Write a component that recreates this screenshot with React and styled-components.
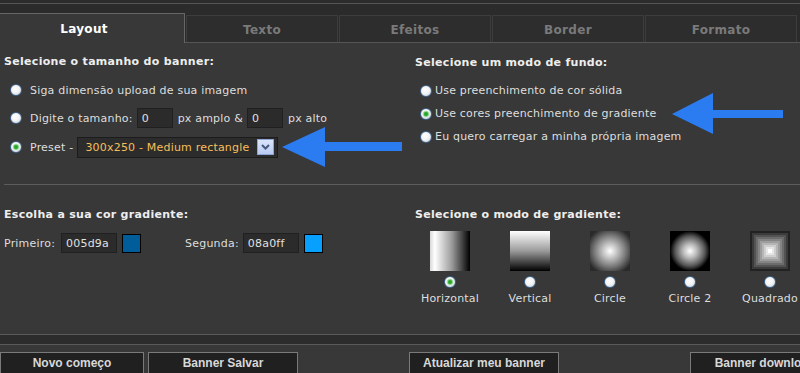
import React from 'react';
import styled, { createGlobalStyle } from 'styled-components';

const Global = createGlobalStyle`
  html, body {
    margin: 0;
    padding: 0;
    background: #383838;
    overflow: hidden;
  }
`;

const font = `"DejaVu Sans", Verdana, sans-serif`;

const Page = styled.div`
  width: 800px;
  height: 373px;
  overflow: hidden;
  position: relative;
  background: #383838;
  font-family: ${font};
  font-size: 11px;
  letter-spacing: 0.2px;
  color: #dedede;
`;

const TopStrip = styled.div`
  height: 3px;
  background: #2c2c2c;
  border-bottom: 1px solid #555;
`;

const TabBar = styled.div`
  display: flex;
  align-items: flex-end;
  height: 38px;
  background: #2b2b2b;
  border-bottom: 1px solid #555;
`;

const Tab = styled.div`
  box-sizing: border-box;
  display: flex;
  align-items: center;
  justify-content: center;
  font-weight: bold;
  font-size: 12px;
  letter-spacing: 0.3px;
  ${(p) =>
    p.$active
      ? `
    width: 185px;
    height: 30px;
    margin-bottom: -1px;
    padding-right: 16px;
    background: #383838;
    color: #fff;
    border-top: 1px solid #666;
    border-right: 1px solid #666;
  `
      : `
    width: 152px;
    height: 27px;
    margin-left: 1px;
    background: #2d2d2d;
    color: #7a7a7a;
    border: 1px solid #3d3d3d;
    border-bottom: none;
    padding-top: 1px;
  `}
`;

const Section = styled.div`
  position: relative;
  display: grid;
  grid-template-columns: 411px 1fr;
  height: ${(p) => p.$height}px;
  padding-left: 4px;
  box-sizing: border-box;
`;

const Column = styled.div`
  padding-top: ${(p) => p.$top}px;
`;

const Heading = styled.div`
  font-weight: bold;
  color: #eee;
  line-height: 14px;
  letter-spacing: 0.3px;
  margin-bottom: ${(p) => p.$gap}px;
`;

const Row = styled.div`
  display: flex;
  align-items: center;
  height: ${(p) => p.$h}px;
  white-space: nowrap;
`;

const RadioDot = styled.span`
  box-sizing: border-box;
  width: 12px;
  height: 12px;
  flex: none;
  border-radius: 50%;
  border: 1px solid #3f6590;
  background: radial-gradient(circle at 40% 35%, #fff 0, #f4f4f4 45%, #c4cfdb 100%);
  margin-left: ${(p) => p.$ml || 0}px;
  margin-right: ${(p) => p.$mr || 0}px;
  display: flex;
  align-items: center;
  justify-content: center;
  &::after {
    content: '';
    display: ${(p) => (p.$checked ? 'block' : 'none')};
    width: 4px;
    height: 4px;
    border-radius: 50%;
    background: #2aa52a;
    box-shadow: 0 0 1px 1px #7ccf7c;
  }
`;

const TextInput = styled.div`
  box-sizing: border-box;
  width: ${(p) => p.$w}px;
  height: 20px;
  background: #2b2b2b;
  border: 1px solid #202020;
  color: #e0e0e0;
  padding-left: 4px;
  display: flex;
  align-items: center;
  margin: 0 ${(p) => p.$mr || 0}px 0 ${(p) => p.$ml || 0}px;
`;

const Select = styled.div`
  box-sizing: border-box;
  width: 201px;
  height: 21px;
  margin-left: 4px;
  background: #2c2c2c;
  border: 1px solid #1c1c1c;
  color: #f7bf5a;
  display: flex;
  align-items: center;
  justify-content: space-between;
  padding: 0 3px 0 7px;
`;

const DropButton = styled.span`
  box-sizing: border-box;
  width: 17px;
  height: 16px;
  border: 1px solid #8ea4d6;
  background: linear-gradient(#dbe5fb, #b9cbf3);
  display: flex;
  align-items: center;
  justify-content: center;
`;

const Divider = styled.div`
  height: 1px;
  margin-left: 4px;
  background: #5c5c5c;
`;

const Swatch = styled.span`
  box-sizing: border-box;
  width: 19px;
  height: 19px;
  border: 1px solid #000;
  background: ${(p) => p.$color};
  margin-left: 5px;
`;

const Label = styled.span`
  margin-right: ${(p) => p.$mr || 0}px;
  margin-left: ${(p) => p.$ml || 0}px;
`;

const Gallery = styled.div`
  display: flex;
  margin-left: -5px;
`;

const Mode = styled.div`
  width: 80px;
  display: flex;
  flex-direction: column;
  align-items: center;
  white-space: nowrap;
`;

const Thumb = styled.div`
  width: 40px;
  height: 40px;
  background: ${(p) => p.$bg};
  margin-bottom: 5px;
`;

const ModeLabel = styled.div`
  margin-top: 4px;
  line-height: 13px;
`;

const Band = styled.div`
  height: 9px;
  background: #2c2c2c;
  border-top: 1px solid #5a5a5a;
  border-bottom: 1px solid #5a5a5a;
`;

const ButtonBar = styled.div`
  display: flex;
  padding-top: 7px;
  white-space: nowrap;
`;

const Button = styled.div`
  box-sizing: border-box;
  flex: none;
  width: ${(p) => p.$w}px;
  height: 22px;
  margin-left: ${(p) => p.$ml}px;
  background: #202020;
  border: 1px solid #7a7a7a;
  color: #d8d8d8;
  font-family: "Liberation Sans", Arial, sans-serif;
  font-weight: bold;
  font-size: 12px;
  letter-spacing: 0;
  display: flex;
  align-items: center;
  justify-content: center;
  padding-bottom: 1px;
`;

const Arrow = styled.svg`
  position: absolute;
  left: ${(p) => p.$x}px;
  top: ${(p) => p.$y}px;
`;

const Chevron = () => (
  <svg width="9" height="6" viewBox="0 0 9 6">
    <path d="M1 1 L4.5 4.5 L8 1" fill="none" stroke="#46587e" strokeWidth="2" />
  </svg>
);

const Pyramid = () => {
  const steps = 10;
  const rects = [];
  for (let i = 0; i < steps; i++) {
    const inset = i * 2;
    const v = Math.round(34 + (221 * i) / (steps - 1));
    rects.push(
      <rect key={i} x={inset} y={inset} width={40 - inset * 2} height={40 - inset * 2} fill={`rgb(${v},${v},${v})`} />
    );
  }
  return (
    <svg width="40" height="40" viewBox="0 0 40 40" style={{ display: 'block' }}>
      {rects}
    </svg>
  );
};

const modes = [
  { name: 'Horizontal', bg: 'linear-gradient(to right, #d8d8d8, #fff 12%, #9a9a9a 55%, #000)', checked: true },
  { name: 'Vertical', bg: 'linear-gradient(#fff, #9a9a9a 50%, #000)' },
  { name: 'Circle', bg: 'radial-gradient(circle at center, #fff 0, #c4c4c4 25%, #7a7a7a 55%, #2a2a2a 85%)' },
  { name: 'Circle 2', bg: 'radial-gradient(circle closest-side, #fff 0, #b8b8b8 35%, #555 75%, #000 100%)' },
  { name: 'Quadrado', pyramid: true },
];

export default function App() {
  return (
    <Page>
      <Global />
      <TopStrip />
      <TabBar>
        <Tab $active>Layout</Tab>
        <Tab>Texto</Tab>
        <Tab>Efeitos</Tab>
        <Tab>Border</Tab>
        <Tab>Formato</Tab>
      </TabBar>

      <Section $height={141}>
        <Column $top={12}>
          <Heading $gap={7}>Selecione o tamanho do banner:</Heading>
          <Row $h={28}>
            <RadioDot $ml={6} $mr={8} />
            Siga dimensão upload de sua imagem
          </Row>
          <Row $h={28}>
            <RadioDot $ml={6} $mr={8} />
            Digite o tamanho:
            <TextInput $w={36} $ml={4} $mr={5}>0</TextInput>
            px amplo &amp;
            <TextInput $w={36} $ml={4} $mr={5}>0</TextInput>
            px alto
          </Row>
          <Row $h={30}>
            <RadioDot $ml={6} $mr={8} $checked />
            Preset -
            <Select>
              300x250 - Medium rectangle
              <DropButton>
                <Chevron />
              </DropButton>
            </Select>
          </Row>
        </Column>
        <Column $top={13}>
          <Heading $gap={9}>Selecione um modo de fundo:</Heading>
          <Row $h={23}>
            <RadioDot $ml={5} $mr={3} />
            Use preenchimento de cor sólida
          </Row>
          <Row $h={23}>
            <RadioDot $ml={5} $mr={3} $checked />
            Use cores preenchimento de gradiente
          </Row>
          <Row $h={23}>
            <RadioDot $ml={5} $mr={3} />
            Eu quero carregar a minha própria imagem
          </Row>
        </Column>

        <Arrow $x={282} $y={84} width="120" height="41" viewBox="0 0 120 41">
          <polygon points="0,20 43,0 43,15 120,15 120,24 43,24 43,40" fill="#2c7cf1" />
        </Arrow>
        <Arrow $x={672} $y={50} width="112" height="41" viewBox="0 0 112 41">
          <polygon points="0,21 41,0 41,17 111,17 111,25 41,25 41,41" fill="#2c7cf1" />
        </Arrow>
      </Section>

      <Divider />

      <Section $height={149}>
        <Column $top={23}>
          <Heading $gap={11}>Escolha a sua cor gradiente:</Heading>
          <Row $h={20}>
            <Label $mr={6}>Primeiro:</Label>
            <TextInput $w={56}>005d9a</TextInput>
            <Swatch $color="#005d9a" />
            <Label $ml={44} $mr={4}>Segunda:</Label>
            <TextInput $w={56}>08a0ff</TextInput>
            <Swatch $color="#08a0ff" />
          </Row>
        </Column>
        <Column $top={23}>
          <Heading $gap={9}>Selecione o modo de gradiente:</Heading>
          <Gallery>
            {modes.map((m) => (
              <Mode key={m.name}>
                {m.pyramid ? (
                  <Thumb $bg="#222">
                    <Pyramid />
                  </Thumb>
                ) : (
                  <Thumb $bg={m.bg} />
                )}
                <RadioDot $checked={m.checked} />
                <ModeLabel>{m.name}</ModeLabel>
              </Mode>
            ))}
          </Gallery>
        </Column>
      </Section>

      <Band />

      <ButtonBar>
        <Button $w={144} $ml={0}>Novo começo</Button>
        <Button $w={150} $ml={4}>Banner Salvar</Button>
        <Button $w={150} $ml={111}>Atualizar meu banner</Button>
        <Button $w={150} $ml={131}>Banner download</Button>
      </ButtonBar>
    </Page>
  );
}
